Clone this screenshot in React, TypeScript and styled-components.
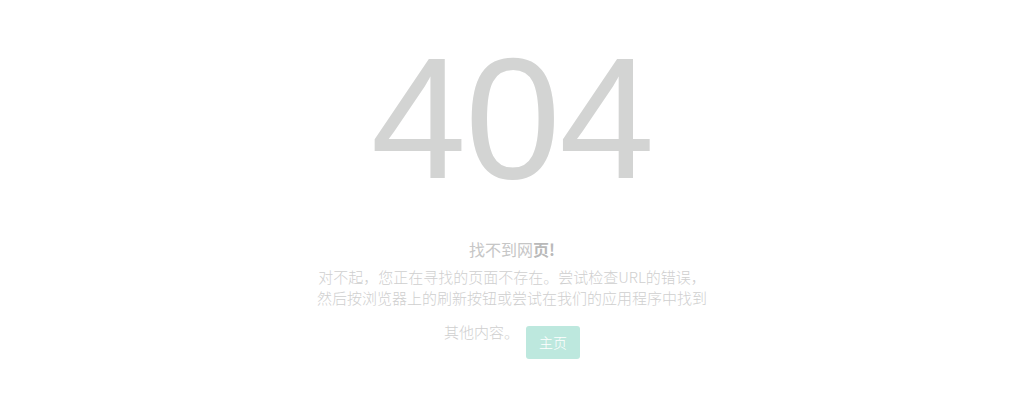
import React from "react";
import styled, { createGlobalStyle } from "styled-components";

const Global = createGlobalStyle`
  html, body { margin: 0; padding: 0; background: #fff; }
  body { font-family: "Noto Sans CJK SC", "Liberation Sans", sans-serif; }
`;

const Page = styled.div`
  width: 1024px;
  height: 400px;
  display: flex;
  flex-direction: column;
  align-items: center;
  box-sizing: border-box;
  padding-top: 32px;
`;

const Code = styled.div`
  font-family: "Liberation Sans", Arial, sans-serif;
  font-size: 172px;
  line-height: 172px;
  color: #d3d4d3;
  letter-spacing: -1.5px;
`;

const Content = styled.div`
  width: 392px;
  margin-top: 35px;
  text-align: center;
  font-family: "Noto Sans CJK SC", sans-serif;
`;

const Title = styled.h3`
  margin: 0;
  font-size: 16px;
  line-height: 20px;
  font-weight: 400;
  color: #c6c6c6;
`;

const Strong = styled.span`
  font-weight: 700;
  color: #b9b9b9;
`;

const Text = styled.p`
  margin: 7px 0 0;
  font-size: 15px;
  line-height: 21px;
  color: #cfcfcf;
  font-weight: 300;
`;

const HomeButton = styled.a`
  display: inline-block;
  margin: 18px 0 0 7px;
  padding: 6px 13px;
  font-size: 14px;
  line-height: 21px;
  color: #fff;
  background: #bde8de;
  border-radius: 3px;
  text-decoration: none;
  vertical-align: -10px;
`;

export default function App() {
  return (
    <>
      <Global />
      <Page>
        <Code>404</Code>
        <Content>
          <Title>
            找不到网<Strong>页!</Strong>
          </Title>
          <Text>
            对不起，您正在寻找的页面不存在。尝试检查URL的错误，
            <br />
            然后按浏览器上的刷新按钮或尝试在我们的应用程序中找到其他内容。
            <HomeButton href="#">主页</HomeButton>
          </Text>
        </Content>
      </Page>
    </>
  );
}
